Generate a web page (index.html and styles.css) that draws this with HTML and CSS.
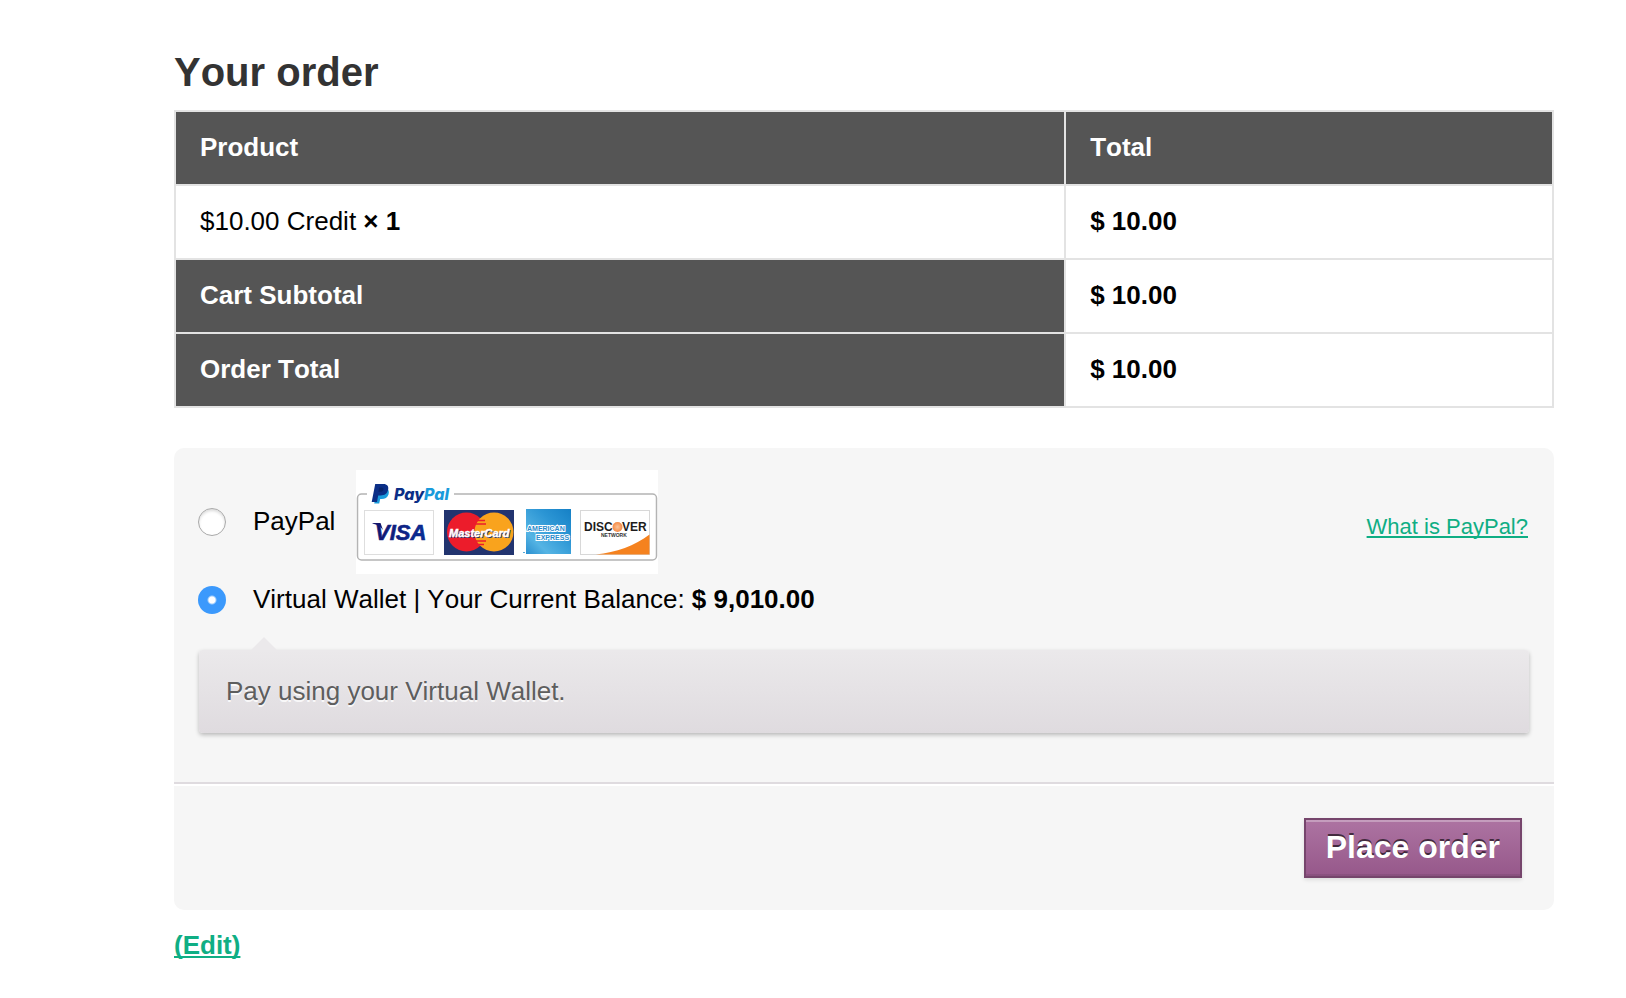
FILE: index.html
```html
<!DOCTYPE html>
<html lang="en">
<head>
<meta charset="utf-8">
<title>Checkout</title>
<link rel="stylesheet" href="styles.css">
</head>
<body>
<main class="checkout">
  <h2 class="title">Your order</h2>
  <table class="order">
    <thead>
      <tr><th class="col-product" scope="col">Product</th><th scope="col">Total</th></tr>
    </thead>
    <tbody>
      <tr><td>$10.00 Credit <strong>× 1</strong></td><td><strong>$ 10.00</strong></td></tr>
    </tbody>
    <tfoot>
      <tr><th scope="row">Cart Subtotal</th><td><strong>$ 10.00</strong></td></tr>
      <tr><th scope="row">Order Total</th><td><strong>$ 10.00</strong></td></tr>
    </tfoot>
  </table>

  <form class="payment">
    <div class="methods">
      <div class="method">
        <input class="radio" type="radio" name="method" id="paypal">
        <label class="label" for="paypal"><span class="name">PayPal</span>
          <svg class="cards" width="302" height="104" viewBox="0 0 302 104" role="img" aria-label="PayPal, Visa, MasterCard, American Express, Discover">
            <defs>
              <linearGradient id="amex" x1="1" y1="0" x2="0" y2="1">
                <stop offset="0" stop-color="#1580c6"/><stop offset=".35" stop-color="#2b95d4"/><stop offset=".75" stop-color="#55b4e4"/><stop offset="1" stop-color="#2a8fcf"/>
              </linearGradient>
              <radialGradient id="disc"><stop offset="0" stop-color="#fbc49a"/><stop offset="1" stop-color="#f58a45"/></radialGradient>
              <linearGradient id="visa" x1="0" x2="1"><stop offset="0" stop-color="#14146b"/><stop offset="1" stop-color="#07309b"/></linearGradient>
            </defs>
            <rect width="302" height="104" fill="#fff"/>
            <path d="M11 24H5.500a4 4 0 0 0-4 4v58a4 4 0 0 0 4 4h291a4 4 0 0 0 4-4V28a4 4 0 0 0-4-4H98" fill="none" stroke="#b4b4b4" stroke-width="1.500"/>
            <path d="M22 18h8.500c2.200 1.400 2.900 3.800 2 6.400-1 3.200-3.600 4.600-6.800 4.600h-1.500l-1 4.600h-5z" fill="#1a9bdc"/>
            <path d="M19.200 14h8.300c3.600 0 5.300 2.300 4.700 5.300-.8 4.500-3.700 6.200-7.400 6.200h-2.600l-1.200 6.500h-5.300z" fill="#0b2f87"/>
            <path d="M23.200 17.500h2.300c1.700 0 2.200.9 1.900 2.200-.4 1.600-1.500 2-3.200 2h-1.800z" fill="#08246c"/>
            <text class="brand" x="38" y="30"><tspan fill="#0b2f87">Pay</tspan><tspan fill="#1a9bdc">Pal</tspan></text>
            <rect x="8.500" y="40.500" width="69" height="44" fill="#fff" stroke="#dedede"/>
            <path d="M16.500 53h8l2.500 7c-2.500-3.500-6-5.500-10.500-6.400z" fill="#14146b"/>
            <text class="visa" x="19" y="70" fill="url(#visa)">VISA</text>
            <rect x="88" y="40" width="70" height="45" fill="#22346f"/>
            <circle cx="110.500" cy="62" r="19.500" fill="#ec1c2b"/>
            <circle cx="138" cy="62" r="19.500" fill="#f9a31d"/>
            <path d="M120 50.500h9M118 54h12M118 71h12M120 74.500h8" stroke="#ec1c2b" stroke-width="1.600"/>
            <text class="mc" x="94" y="68" fill="#22346f">MasterCard</text>
            <text class="mc" x="93" y="67" fill="#fff" stroke="#fff" stroke-width=".4">MasterCard</text>
            <rect x="170" y="39" width="45" height="45" fill="url(#amex)"/>
            <text class="amex" x="171" y="61">AMERICAN</text>
            <text class="amex" x="180" y="70">EXPRESS</text>
            <path d="M167 82.500h2" stroke="#55a7d8"/>
            <rect x="224.500" y="40.500" width="69" height="44" fill="#fff" stroke="#d8d8d8"/>
            <path d="M240 84.500c20-2 39-9 53.500-20v20z" fill="#f5821f"/>
            <text class="discover" x="228" y="61">DISC</text>
            <circle cx="261.500" cy="57" r="5" fill="url(#disc)"/>
            <text class="discover" x="266" y="61">VER</text>
            <text class="network" x="245" y="67">NETWORK</text>
          </svg>
        </label>
        <a class="about" href="#">What is PayPal?</a>
      </div>
      <div class="method wallet">
        <input class="radio" type="radio" name="method" id="wallet" checked>
        <label class="label" for="wallet"><span class="name">Virtual Wallet | Your Current Balance: <strong>$ 9,010.00</strong></span></label>
      </div>
      <div class="hint">Pay using your Virtual Wallet.</div>
    </div>
    <div class="actions">
      <button class="place" type="button">Place order</button>
    </div>
  </form>
  <a class="edit" href="#">(Edit)</a>
</main>
</body>
</html>
```
FILE: styles.css
```css
* { box-sizing: border-box; }

body {
  margin: 0;
  background: #fff;
  color: #000;
  font: 26px/30px "Liberation Sans", Arial, sans-serif;
  font-kerning: none;
}

.checkout { padding: 48px 72px 38px 174px; }

.title {
  margin: 0 0 14px;
  color: #333;
  font-size: 40px;
  line-height: 48px;
}

.order {
  width: 100%;
  border-collapse: collapse;
}

.order th,
.order td {
  padding: 20px 24px 22px;
  border: 2px solid #e3e3e3;
  text-align: left;
}

.order th {
  background: #555;
  color: #fff;
}

.order .col-product { width: 64.6%; }

.payment {
  margin-top: 40px;
  border-radius: 10px;
  background: #f6f6f6;
}

.methods {
  padding: 22px 24px 49px;
  border-bottom: 2px solid #dfdbdf;
}

.method {
  display: flex;
  align-items: center;
  gap: 27px;
}

.wallet { height: 52px; }

.radio {
  appearance: none;
  flex: none;
  width: 28px;
  height: 28px;
  margin: 0;
  border: 1px solid #a9a9a9;
  border-radius: 50%;
  background: #fff;
  box-shadow: inset 0 2px 3px rgba(0, 0, 0, .14);
}

.radio:checked {
  border: 0;
  background: radial-gradient(circle, #fff 3px, #3b99fc 5px);
  box-shadow: none;
}

.label {
  display: flex;
  align-items: center;
  gap: 21px;
}

.name { padding-bottom: 2px; }

.cards { display: block; }

.cards text { font-family: "Liberation Sans", Arial, sans-serif; font-weight: bold; }
.cards .brand { font: italic 800 16px Inter, "Open Sans", sans-serif; }
.cards .visa {
  font-size: 22px;
  font-style: italic;
  stroke: #0c2283;
  stroke-width: .6px;
}
.cards .mc { font-size: 11px; font-style: italic; }
.cards .amex {
  font-size: 7px;
  fill: #2a8ccc;
  stroke: #fff;
  stroke-width: 2px;
  paint-order: stroke;
}
.cards .discover { font-size: 12px; fill: #1c1c1c; }
.cards .network { font-size: 5px; fill: #333; }

a {
  color: #0fae84;
  text-decoration: underline;
  text-decoration-thickness: 2px;
  text-underline-offset: 2px;
  text-decoration-skip-ink: none;
}

.about {
  margin-left: auto;
  padding: 10px 2px 0 0;
  font-size: 22px;
  font-kerning: normal;
}

.hint {
  position: relative;
  margin: 24px 1px 0;
  padding: 26px 27px 27px;
  border-radius: 4px;
  background: linear-gradient(#ebe9eb, #dfdbdf);
  box-shadow: 0 2px 4px rgba(0, 0, 0, .25);
  color: #5e5e5e;
  text-shadow: 0 2px 0 rgba(255, 255, 255, .8);
}

.hint::before {
  content: "";
  position: absolute;
  left: 52px;
  bottom: 100%;
  border: 13px solid transparent;
  border-top: 0;
  border-bottom-color: #ebe9eb;
}

.actions {
  display: flex;
  justify-content: flex-end;
  padding: 32px;
  border-top: 2px solid #fff;
}

.place {
  padding: 9px 20px 11px;
  border: 2px solid #76456c;
  background: linear-gradient(#ad74a2, #96588a);
  box-shadow: inset 0 -2px 0 rgba(0, 0, 0, .075), inset 0 2px 0 rgba(255, 255, 255, .3), 0 2px 4px rgba(0, 0, 0, .1);
  color: #fff;
  font: bold 32px/36px "Liberation Sans", Arial, sans-serif;
  text-shadow: 0 -2px 0 rgba(0, 0, 0, .6);
}

.edit {
  display: inline-block;
  margin-top: 20px;
  font-weight: bold;
}
```
